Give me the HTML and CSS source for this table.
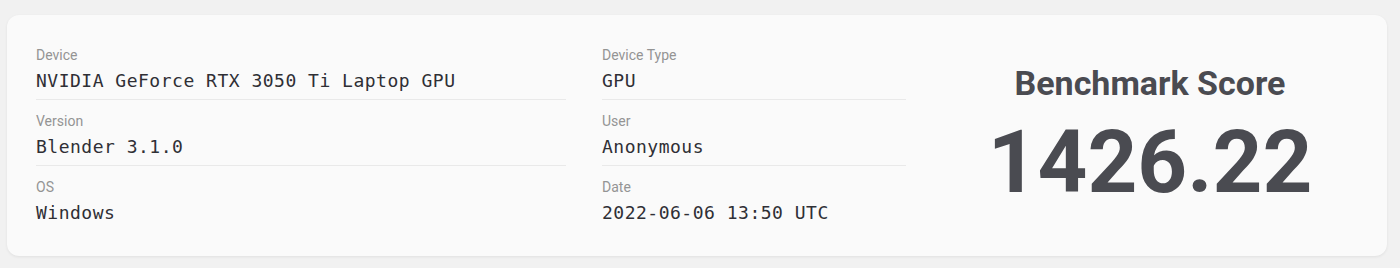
FILE: index.html
```html
<!DOCTYPE html>
<html>
<head>
<meta charset="utf-8">
<link rel="stylesheet" href="styles.css">
</head>
<body>
<div class="card">
  <div class="col col-a">
    <div class="row"><div class="label">Device</div><div class="value">NVIDIA GeForce RTX 3050 Ti Laptop GPU</div></div>
    <div class="row"><div class="label">Version</div><div class="value">Blender 3.1.0</div></div>
    <div class="row"><div class="label">OS</div><div class="value">Windows</div></div>
  </div>
  <div class="col col-b">
    <div class="row"><div class="label">Device Type</div><div class="value">GPU</div></div>
    <div class="row"><div class="label">User</div><div class="value">Anonymous</div></div>
    <div class="row"><div class="label">Date</div><div class="value">2022-06-06 13:50 UTC</div></div>
  </div>
  <div class="score">
    <div class="score-title">Benchmark Score</div>
    <div class="score-value">1426.22</div>
  </div>
</div>
</body>
</html>
```

FILE: styles.css
```css
html, body {
  margin: 0;
  padding: 0;
}
body {
  background: #f1f1f1;
  font-family: Roboto, "Liberation Sans", sans-serif;
  padding: 15px 13px 12px 7px;
}
.card {
  background: #fafafa;
  border-radius: 12px;
  box-shadow: 0 1px 3px rgba(0, 0, 0, 0.07);
  padding: 19px 29px 25px 29px;
  display: grid;
  grid-template-columns: 530px 304px 1fr;
  column-gap: 36px;
  height: 197px;
}
.row {
  padding: 11px 0 5px 0;
  border-bottom: 1px solid #e9e9e9;
}
.row:last-child {
  border-bottom: none;
}
.label {
  font-size: 14px;
  line-height: 20px;
  color: #949494;
}
.value {
  margin-top: 3px;
  font-family: "DejaVu Sans Mono", "Liberation Mono", monospace;
  font-size: 18px;
  letter-spacing: 0.5px;
  line-height: 26px;
  color: #2f2f35;
}
.score {
  display: flex;
  flex-direction: column;
  align-items: center;
  justify-content: center;
  padding-top: 3px;
  color: #4a4b51;
}
.score-title {
  font-size: 34px;
  font-weight: 700;
  line-height: 40px;
}
.score-value {
  margin-top: 16px;
  font-size: 87px;
  font-weight: 700;
  line-height: 87px;
}
```
